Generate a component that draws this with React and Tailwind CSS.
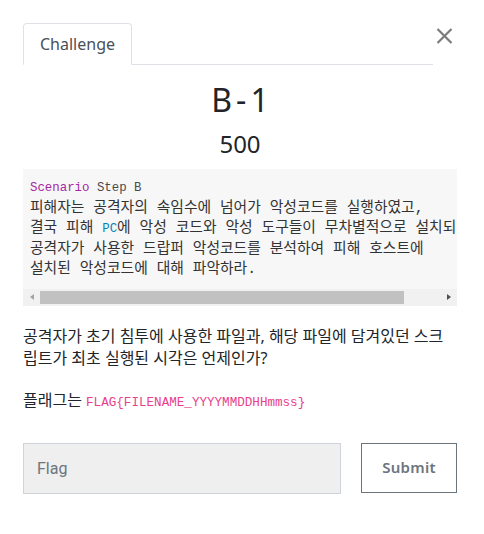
import React from "react";

export default function App() {
  return (
    <div className="w-[484px] h-[534px] bg-white pt-[23px] pl-[23px] font-['Noto_Sans','Noto_Sans_CJK_KR',sans-serif] text-[#212529]">
      <div className="w-[434px]">
        <div className="flex items-start">
          <div className="flex-1 flex border-b border-[#dee2e6]">
            <div className="-mb-px border border-[#dee2e6] border-b-white rounded-t-[4px] bg-white px-4 py-2 h-[42px] text-[16px] leading-6 text-[#495057]">
              Challenge
            </div>
          </div>
          <button className="w-[24px] pl-[3px] pt-[5px]">
            <svg width="17" height="16" viewBox="0 0 17 16">
              <path d="M1.5 1 L15.5 15 M15.5 1 L1.5 15" stroke="#7c7c7c" strokeWidth="2.2" fill="none" />
            </svg>
          </button>
        </div>

        <div className="mt-[16px] h-[38px] text-center text-[32px] leading-[38px] text-[#212529]">
          B<span className="mx-[4px]">-</span>1
        </div>
        <div className="mt-[10px] h-[29px] text-center text-[24px] leading-[29px] text-[#212529]">500</div>

        <div className="mt-[11px] bg-[#f7f7f7]">
          <div className="overflow-hidden whitespace-pre pt-[8px] pb-[9px] pl-[7px] text-[14.8px] leading-[20.5px] text-[#333333] font-['Liberation_Mono','Noto_Sans_CJK_KR',monospace]">
            <div className="h-[20.5px]">
              <span className="text-[12.4px] text-[#a626a4]">Scenario</span>
              <span className="text-[12.4px] text-[#4a4a4a]"> Step B</span>
            </div>
            <div className="h-[20.5px]">피해자는 공격자의 속임수에 넘어가 악성코드를 실행하였고,</div>
            <div className="h-[20.5px]">
              결국 피해 <span className="text-[12.4px] text-[#0184bc]">PC</span>에 악성 코드와 악성 도구들이 무차별적으로 설치되었다.
            </div>
            <div className="h-[20.5px]">공격자가 사용한 드랍퍼 악성코드를 분석하여 피해 호스트에</div>
            <div className="h-[20.5px]">설치된 악성코드에 대해 파악하라.</div>
          </div>
          <div className="h-[17px] bg-[#f1f1f1] flex items-center">
            <div className="w-[17px] h-[17px] flex items-center justify-center">
              <div className="w-0 h-0 border-y-[3.5px] border-y-transparent border-r-[4px] border-r-[#a3a3a3]" />
            </div>
            <div className="w-[364px] h-[13px] bg-[#c1c1c1]" />
            <div className="flex-1" />
            <div className="w-[17px] h-[17px] flex items-center justify-center">
              <div className="w-0 h-0 border-y-[3.5px] border-y-transparent border-l-[4px] border-l-[#505050]" />
            </div>
          </div>
        </div>

        <div className="mt-[19px] text-[16px] leading-[22.5px] text-[#212529] whitespace-nowrap">
          <div className="h-[22.5px]">공격자가 초기 침투에 사용한 파일과, 해당 파일에 담겨있던 스크</div>
          <div className="h-[22.5px]">립트가 최초 실행된 시각은 언제인가?</div>
        </div>

        <div className="mt-[19px] h-[22.5px] text-[16px] leading-[22.5px] text-[#212529] whitespace-nowrap">
          플래그는{" "}
          <span className="text-[12.6px] text-[#e83e8c] font-['Liberation_Mono',monospace]">
            FLAG{"{"}FILENAME_YYYYMMDDHHmmss{"}"}
          </span>
        </div>

        <div className="mt-[31.5px] flex items-start">
          <input
            className="w-[318px] h-[51px] border border-[#ced4da] bg-[#efefef] pl-[13px] text-[16px] font-['Roboto',sans-serif] text-[#495057] placeholder:text-[#6c757d] outline-none"
            placeholder="Flag"
          />
          <button className="ml-[20px] w-[96px] h-[50px] border border-[#6c757d] bg-white text-[15px] font-semibold tracking-[0.3px] text-[#6c757d]">
            Submit
          </button>
        </div>
      </div>
    </div>
  );
}
